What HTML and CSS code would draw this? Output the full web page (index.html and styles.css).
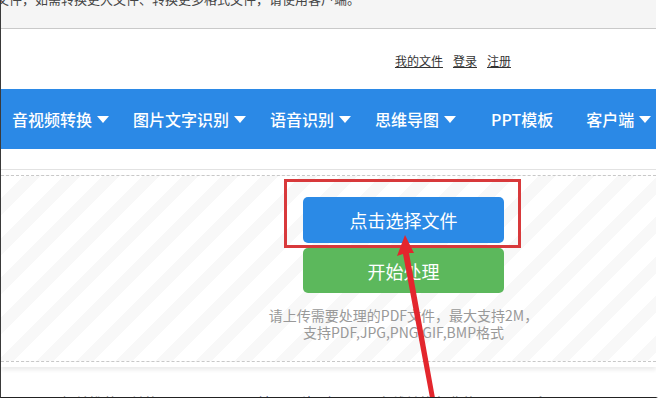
FILE: index.html
```html
<!DOCTYPE html>
<html lang="zh-CN">
<head>
    <meta charset="UTF-8">
    <meta name="viewport" content="width=device-width, initial-scale=1.0">
    <title>PDF转换</title>
    <link rel="stylesheet" href="styles.css">
</head>
<body>
    <div id="page">
        <div class="notice">
            <p>文件，如需转换更大文件、转换更多格式文件，请使用客户端。</p>
        </div>

        <div class="userbar">
            <a href="#">我的文件</a>
            <a href="#">登录</a>
            <a href="#">注册</a>
        </div>

        <ul class="nav">
            <li>音视频转换 <span class="caret"></span></li>
            <li>图片文字识别 <span class="caret"></span></li>
            <li>语音识别 <span class="caret"></span></li>
            <li>思维导图 <span class="caret"></span></li>
            <li class="plain">PPT模板</li>
            <li>客户端 <span class="caret"></span></li>
        </ul>

        <div class="panel">
            <div class="dropzone">
                <button class="btn btn-blue">点击选择文件</button>
                <button class="btn btn-green">开始处理</button>
                <p class="tip">请上传需要处理的PDF文件，最大支持2M，<br>支持PDF,JPG,PNG,GIF,BMP格式</p>
            </div>
        </div>

        <div class="related">
            <span>相关推荐：转换工具</span>
            <span class="hot">《PDF转Word解除》</span>
            <span>在线转换免费使用</span>
            <span>更多</span>
        </div>

        <!-- 截图上的标注 -->
        <div class="mark"></div>
        <svg class="arrow" width="658" height="398" viewBox="0 0 658 398">
            <polygon points="405,235 397,256 403,254 430,398 435,398 409,253 414,253" fill="#e3262d"/>
        </svg>
    </div>
</body>
</html>
```

FILE: styles.css
```css
body {
    margin: 0;
    font-family: "Noto Sans CJK SC", "Noto Sans", sans-serif;
    color: #333;
    background: #fff;
}

#page {
    position: relative;
    height: 398px;
    overflow: hidden;
    border-left: 1px solid #3a3a3a;
    border-right: 2px solid #fff;
    border-bottom: 1px solid #222;
    box-sizing: border-box;
}

.notice {
    height: 28px;
    background: #f5f5f5;
    border-bottom: 1px solid #c9c9c9;
    overflow: hidden;
}

.notice p {
    margin: -9px 0 0 -5px;
    font-size: 13px;
    line-height: 16px;
    color: #444;
    white-space: nowrap;
}

.userbar {
    height: 60px;
    display: flex;
    justify-content: flex-end;
    align-items: center;
    gap: 10px;
    padding-right: 145px;
    padding-top: 2px;
    box-sizing: border-box;
}

.userbar a {
    font-size: 12px;
    color: #333;
    text-decoration: underline;
}

.nav {
    list-style: none;
    margin: 0;
    padding: 0;
    height: 60px;
    background: #2b89e6;
    display: flex;
    align-items: center;
    color: #fff;
    font-size: 16px;
    font-weight: 500;
}

.nav li {
    padding: 0 12px;
    display: flex;
    align-items: center;
    white-space: nowrap;
}

.nav li:first-child { padding-left: 11px; }
.nav li.plain { padding: 0 21px 0 23px; }

.caret {
    display: inline-block;
    width: 0;
    height: 0;
    margin-left: 5px;
    border-left: 6px solid transparent;
    border-right: 6px solid transparent;
    border-top: 7px solid #fff;
}

.panel {
    margin-top: 20px;
    border-top: 1px solid #e2e2e2;
    padding: 5px 0;
    box-shadow: 0 3px 4px rgba(0, 0, 0, 0.08);
}

.dropzone {
    border-top: 1px dashed #c8c8c8;
    border-bottom: 1px dashed #c8c8c8;
    padding: 21px 0 20px 150px;
    display: flex;
    flex-direction: column;
    align-items: center;
    background: repeating-linear-gradient(135deg, #fff 0 16px, #f8f8f8 16px 28px);
}

.btn {
    width: 201px;
    border: none;
    border-radius: 5px;
    color: #fff;
    font-family: inherit;
    font-size: 18px;
    cursor: pointer;
}

.btn-blue {
    height: 46px;
    background: #2b8ae6;
}

.btn-green {
    height: 45px;
    margin-top: 5px;
    background: #5cb85c;
}

.tip {
    margin: 14px 0 0;
    font-size: 14px;
    line-height: 17px;
    color: #999;
    text-align: center;
}

.related {
    margin-top: 26px;
    display: flex;
    gap: 30px;
    padding-left: 60px;
    font-size: 14px;
    line-height: 18px;
    color: #999;
    white-space: nowrap;
}

.related .hot { color: #1f3c78; }

.mark {
    position: absolute;
    left: 283px;
    top: 179px;
    width: 231px;
    height: 63px;
    border: 3px solid #d8393b;
}

.arrow {
    position: absolute;
    left: -1px;
    top: 0;
}
```
